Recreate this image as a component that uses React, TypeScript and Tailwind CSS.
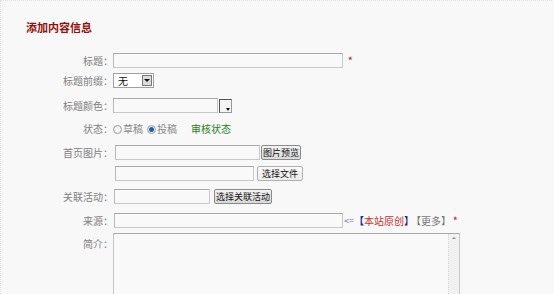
import type { ReactNode } from 'react'

const font = { fontFamily: '"Noto Sans CJK SC", "Liberation Sans", sans-serif' }

function Label({ children, top = false }: { children: ReactNode; top?: boolean }) {
  return (
    <div
      className={`w-[112px] shrink-0 text-right text-[10px] leading-[12px] text-[#808080] ${top ? 'self-start pt-[5px]' : ''}`}
    >
      {children}
    </div>
  )
}

function Input({ className = '' }: { className?: string }) {
  return (
    <div
      className={`h-[15px] border border-[#c8c8c8] border-t-[#a8a8a8] border-l-[#b8b8b8] bg-[#f9f9f9] ${className}`}
    />
  )
}

function Button({ children, className = '' }: { children: ReactNode; className?: string }) {
  return (
    <div
      className={`flex h-[15px] items-center justify-center whitespace-nowrap rounded-[2px] border border-[#8a8a8a] bg-gradient-to-b from-[#f4f4f4] to-[#d8d8d8] text-[9px] leading-none text-[#111] ${className}`}
    >
      {children}
    </div>
  )
}

function Radio({ checked }: { checked?: boolean }) {
  return (
    <span className="mr-[1px] inline-flex h-[9px] w-[9px] items-center justify-center rounded-full border border-[#999] bg-[#f4f4f4]">
      {checked && <span className="h-[5px] w-[5px] rounded-full bg-[#1f5fa8]" />}
    </span>
  )
}

export default function App() {
  return (
    <div
      className="h-[294px] w-[554px] overflow-hidden border-t border-l border-dotted border-[#e2e2e2] bg-[#f8f8f8]"
      style={font}
    >
      <div className="flex flex-col">
        <div className="ml-[25px] mt-[18px] text-[11px] font-bold leading-[16px] text-[#8f1010]">
          添加内容信息
        </div>

        {/* 标题 */}
        <div className="mt-[18px] flex h-[15px] items-center">
          <Label>标题：</Label>
          <Input className="w-[230px]" />
          <span className="ml-[5px] text-[9px] font-bold text-[#c03030]">*</span>
        </div>

        {/* 标题前缀 */}
        <div className="mt-[5px] flex h-[15px] items-center">
          <Label>标题前缀：</Label>
          <div className="flex h-[15px] w-[41px] items-center border border-[#a0a0a0] bg-white">
            <span className="ml-[4px] flex-1 text-[10px] leading-none text-[#111]">无</span>
            <span className="mr-[1px] flex h-[11px] w-[10px] items-center justify-center border border-[#777] bg-[#dcdcdc]">
              <span className="h-0 w-0 border-x-[3px] border-t-[3px] border-x-transparent border-t-[#111]" />
            </span>
          </div>
        </div>

        {/* 标题颜色 */}
        <div className="mt-[10px] flex h-[15px] items-center">
          <Label>标题颜色：</Label>
          <Input className="w-[105px]" />
          <div className="relative ml-[1px] h-[14px] w-[13px] border border-[#555] border-r-[#999] border-b-[#999] bg-[#f4f4f4]">
            <span className="absolute bottom-[1px] right-[1px] h-0 w-0 border-x-[2px] border-t-[3px] border-x-transparent border-t-[#111]" />
          </div>
        </div>

        {/* 状态 */}
        <div className="mt-[9px] flex h-[14px] items-center">
          <Label>状态：</Label>
          <div className="flex items-center text-[10px] leading-none text-[#888]">
            <Radio />
            <span>草稿</span>
            <span className="ml-[4px]" />
            <Radio checked />
            <span>投稿</span>
            <span className="ml-[14px] text-[#2e7d1e]">审核状态</span>
          </div>
        </div>

        {/* 首页图片 */}
        <div className="mt-[9px] flex h-[15px] items-center">
          <Label>首页图片：</Label>
          <Input className="ml-[2px] w-[145px]" />
          <Button className="ml-[1px] w-[40px]">图片预览</Button>
        </div>

        <div className="mt-[6px] flex h-[15px] items-center">
          <div className="w-[112px] shrink-0" />
          <Input className="ml-[2px] w-[139px]" />
          <Button className="ml-[3px] w-[46px] border-[#b0b0b0] from-[#fafafa] to-[#ececec]">选择文件</Button>
        </div>

        {/* 关联活动 */}
        <div className="mt-[8px] flex h-[15px] items-center">
          <Label>关联活动：</Label>
          <Input className="ml-[1px] w-[96px]" />
          <Button className="ml-[4px] w-[58px]">选择关联活动</Button>
        </div>

        {/* 来源 */}
        <div className="mt-[9px] flex h-[15px] items-center">
          <Label>来源：</Label>
          <Input className="ml-[1px] w-[229px]" />
          <span className="ml-[1px] text-[9px] leading-none text-[#6a6a9a]">&lt;=</span>
          <span className="text-[10px] leading-none">
            <span className="font-bold text-[#1a2a8a]">【</span>
            <span className="text-[#c03030]">本站原创</span>
            <span className="font-bold text-[#1a2a8a]">】</span>
            <span className="ml-[2px] text-[#777]">【更多】</span>
          </span>
          <span className="ml-[2px] text-[9px] font-bold text-[#c03030]">*</span>
        </div>

        {/* 简介 */}
        <div className="mt-[5px] flex items-start">
          <Label top>简介：</Label>
          <div className="flex h-[70px] w-[347px] border border-[#c8c8c8] border-t-[#a8a8a8] bg-[#f9f9f9]">
            <div className="flex-1" />
            <div className="flex w-[11px] flex-col items-center justify-between border-l border-dotted border-[#d8d8d8] bg-[#f1f1f1] py-[3px]">
              <span className="h-0 w-0 border-x-[2px] border-b-[2px] border-x-transparent border-b-[#888]" />
              <span className="h-0 w-0 border-x-[2px] border-t-[2px] border-x-transparent border-t-[#888]" />
            </div>
          </div>
        </div>
      </div>
    </div>
  )
}
